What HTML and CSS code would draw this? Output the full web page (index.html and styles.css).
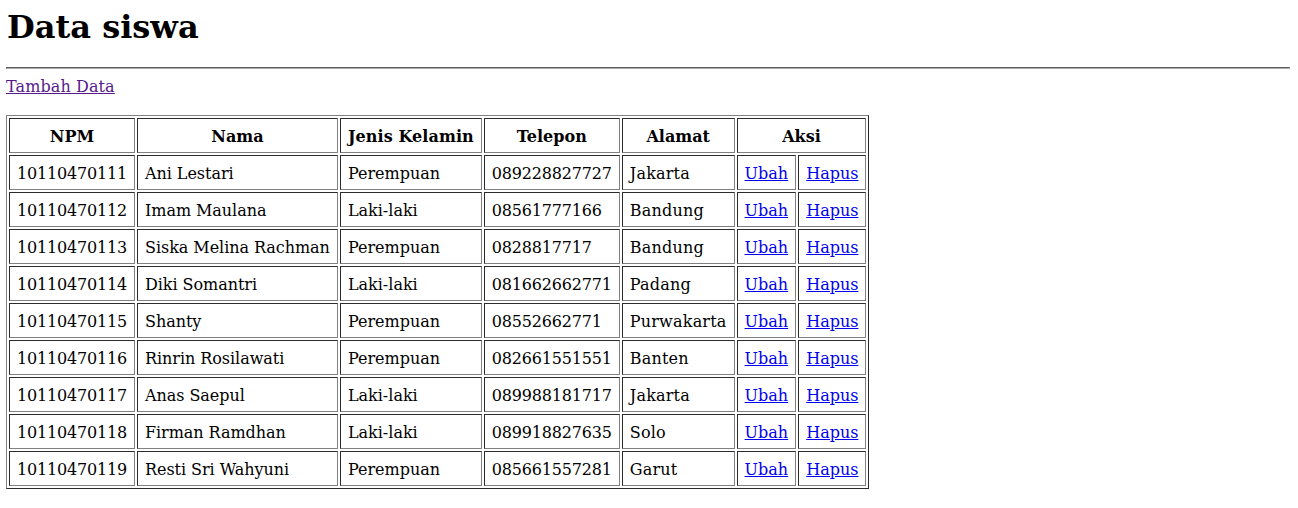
FILE: index.html
```html
<!DOCTYPE html>
<html>
<head>
<meta charset="utf-8">
<title>Data siswa</title>
<link rel="stylesheet" href="styles.css">
</head>
<body>
<h1 class="title">Data siswa</h1>
<hr class="rule">
<a class="link visited add" href="#tambah">Tambah Data</a><br><br>
<table class="data">
<tr><th>NPM</th><th>Nama</th><th>Jenis Kelamin</th><th>Telepon</th><th>Alamat</th><th colspan="2">Aksi</th></tr>
<tr><td>10110470111</td><td>Ani Lestari</td><td>Perempuan</td><td>089228827727</td><td>Jakarta</td><td><a class="link" href="#u">Ubah</a></td><td><a class="link" href="#h">Hapus</a></td></tr>
<tr><td>10110470112</td><td>Imam Maulana</td><td>Laki-laki</td><td>08561777166</td><td>Bandung</td><td><a class="link" href="#u">Ubah</a></td><td><a class="link" href="#h">Hapus</a></td></tr>
<tr><td>10110470113</td><td>Siska Melina Rachman</td><td>Perempuan</td><td>0828817717</td><td>Bandung</td><td><a class="link" href="#u">Ubah</a></td><td><a class="link" href="#h">Hapus</a></td></tr>
<tr><td>10110470114</td><td>Diki Somantri</td><td>Laki-laki</td><td>081662662771</td><td>Padang</td><td><a class="link" href="#u">Ubah</a></td><td><a class="link" href="#h">Hapus</a></td></tr>
<tr><td>10110470115</td><td>Shanty</td><td>Perempuan</td><td>08552662771</td><td>Purwakarta</td><td><a class="link" href="#u">Ubah</a></td><td><a class="link" href="#h">Hapus</a></td></tr>
<tr><td>10110470116</td><td>Rinrin Rosilawati</td><td>Perempuan</td><td>082661551551</td><td>Banten</td><td><a class="link" href="#u">Ubah</a></td><td><a class="link" href="#h">Hapus</a></td></tr>
<tr><td>10110470117</td><td>Anas Saepul</td><td>Laki-laki</td><td>089988181717</td><td>Jakarta</td><td><a class="link" href="#u">Ubah</a></td><td><a class="link" href="#h">Hapus</a></td></tr>
<tr><td>10110470118</td><td>Firman Ramdhan</td><td>Laki-laki</td><td>089918827635</td><td>Solo</td><td><a class="link" href="#u">Ubah</a></td><td><a class="link" href="#h">Hapus</a></td></tr>
<tr><td>10110470119</td><td>Resti Sri Wahyuni</td><td>Perempuan</td><td>085661557281</td><td>Garut</td><td><a class="link" href="#u">Ubah</a></td><td><a class="link" href="#h">Hapus</a></td></tr>
</table>
</body>
</html>
```
FILE: styles.css
```css
body {
  margin: 8px 8px 8px 6px;
  font-family: "DejaVu Serif", serif;
  font-size: 16px;
  color: #000;
  background: #fff;
}
.title {
  font-size: 32px;
  font-weight: bold;
  margin: 0 0 21px 1px;
}
.rule {
  margin: 8px 0;
  border-style: solid;
  border-width: 1px;
  border-color: #5f5f5f #aaa #aaa #5f5f5f;
}
.link { color: #0000ee; }
.link.visited { color: #551a8b; }
.add { letter-spacing: 0.1px; }
.data {
  border: 1px outset gray;
  border-spacing: 2px;
}
.data th, .data td {
  border: 1px inset gray;
  padding: 8px 7px 6px;
}
.data th { font-weight: bold; text-align: center; }
.data td { text-align: left; }
.data td:nth-child(1), .data td:nth-child(4) { letter-spacing: -0.18px; }
.data td:nth-child(2) { letter-spacing: -0.05px; }
.data th:nth-child(3) { letter-spacing: 0.08px; }
.data td:nth-child(5) { letter-spacing: 0.2px; }
```
